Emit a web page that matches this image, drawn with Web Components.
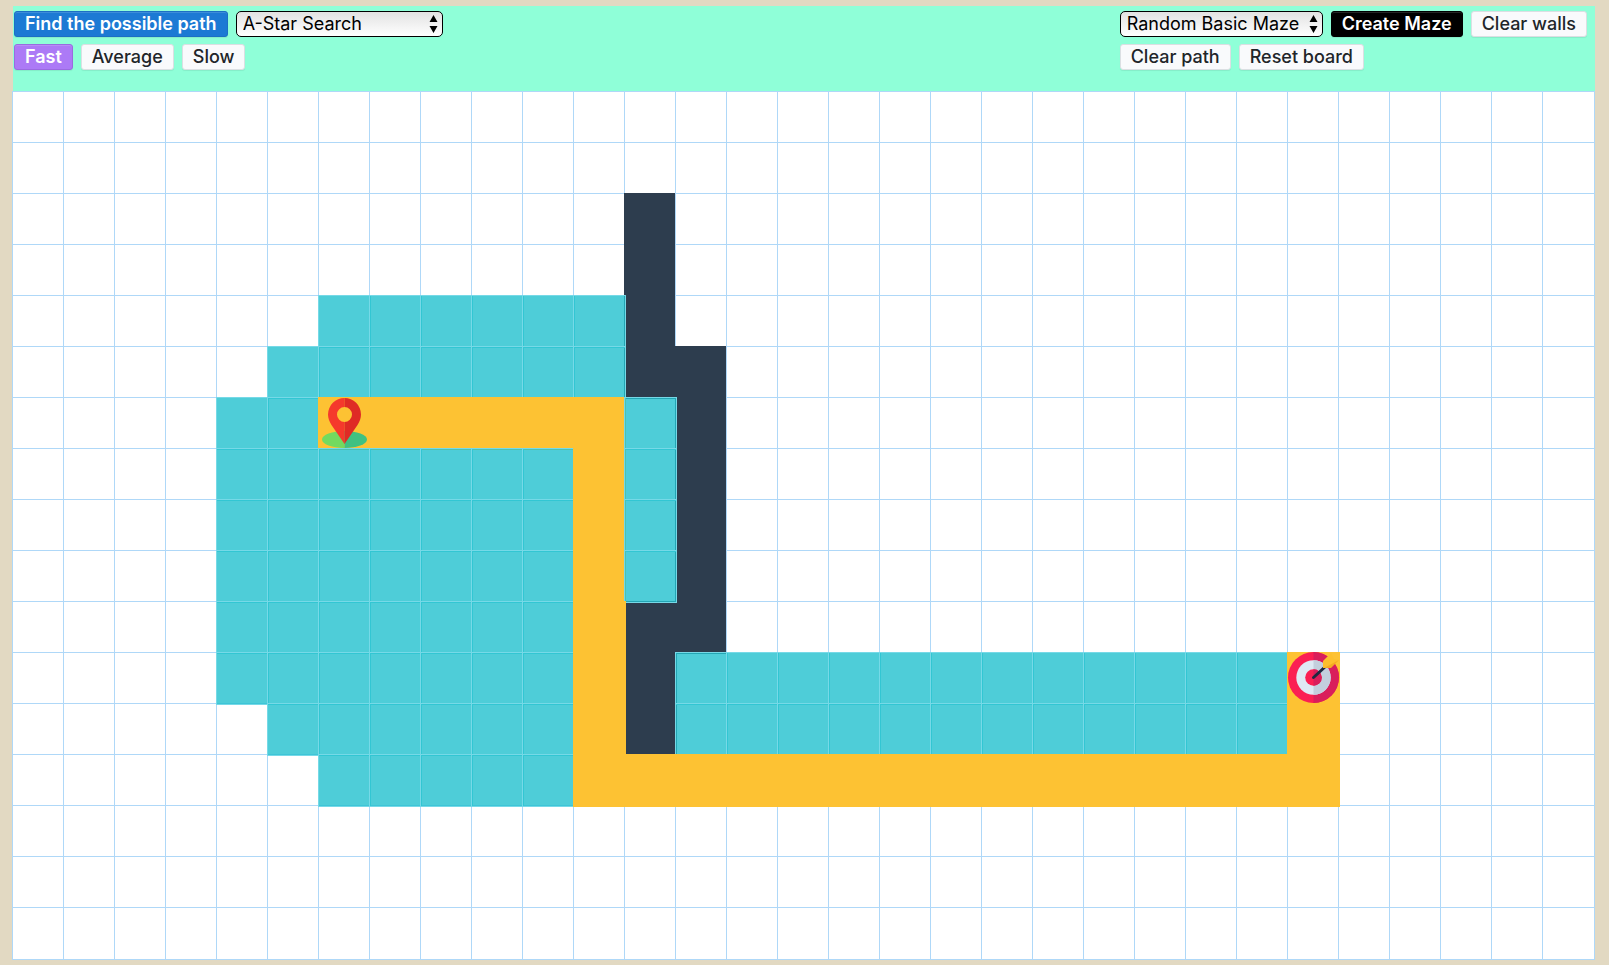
<!DOCTYPE html>
<html lang="en">
<head>
<meta charset="utf-8">
<title>Pathfinding Visualizer</title>
<style>
html{background:#e2d9c2}
body{margin:0;padding:6px 14px 4px 12px;font:500 18px/24px Inter,"Liberation Sans",sans-serif;color:#212529}
</style>
</head>
<body>
<path-app></path-app>
<script>
const PIN = `<svg viewBox="0 0 51 51" aria-label="Start"><path d="M4 42.500a22.500 8.500 0 0 1 22.500-8.500v17A22.500 8.500 0 0 1 4 42.500z" fill="#73da5f"/><path d="M49 42.500a22.500 8.500 0 0 0-22.500-8.500v17A22.500 8.500 0 0 0 49 42.500z" fill="#40c181"/><path d="M26.500 1A16.500 16.500 0 0 0 10 17.500c0 4 1.500 7 3.500 10.500L26.500 47V25a7.500 7.500 0 0 1 0-15z" fill="#f5392c"/><path d="M26.500 1A16.500 16.500 0 0 1 43 17.500c0 4-1.500 7-3.500 10.500L26.500 47V25a7.500 7.500 0 0 0 0-15z" fill="#df2b25"/></svg>`;
const TARGET = `<svg viewBox="-1 0 53 53" class="target" aria-label="Target"><circle cx="25.500" cy="25.500" r="25.500" fill="#fb1f53"/><path d="M25.500 0a25.500 25.500 0 0 1 0 51z" fill="#d91e5b"/><circle cx="25.500" cy="25.500" r="17.200" fill="#dfe9f4"/><path d="M25.500 8.300a17.200 17.200 0 0 1 0 34.400z" fill="#c3cfdd"/><circle cx="25.500" cy="25.500" r="8.300" fill="#fb1f53"/><path d="M25.500 17.200a8.300 8.300 0 0 1 0 16.600z" fill="#d91e5b"/><path d="M25.500 25.500L38 14" stroke="#1f2940" stroke-width="3" stroke-linecap="round"/><path d="M35 9L43 1l3 6 5 1-9 8h-7z" fill="#fdbf2d"/><path d="M36 16L51 8l-8 8z" fill="#f4ab22"/></svg>`;

class AppButton extends HTMLElement{
  connectedCallback(){
    this.attachShadow({mode:'open'}).innerHTML=`<style>
:host{display:block}
button{box-sizing:border-box;height:26px;padding:0 10px;margin:0;border:1px solid #dbdfe3;border-radius:3px;background:#f9fafc;color:inherit;font:inherit;white-space:nowrap;display:block;width:100%;box-shadow:inset 0 1px 0 rgba(255,255,255,.15),0 1px 1px rgba(0,0,0,.075)}
:host([tone]) button{font-weight:600;color:#fff}
:host([tone=primary]) button{background:#1c7ad4;border-color:#1c6fc4}
:host([tone=active]) button{background:#ac7af6;border-color:#9a6be0}
:host([tone=dark]) button{background:#000;border-color:#000}
</style><button type="button"><slot></slot></button>`;
  }
}
customElements.define('app-button',AppButton);

class AppSelect extends HTMLElement{
  connectedCallback(){
    const options=this.getAttribute('options').split(',').map(o=>`<option>${o}</option>`).join('');
    this.attachShadow({mode:'open'}).innerHTML=`<style>
:host{display:block;position:relative}
select{appearance:none;box-sizing:border-box;display:block;width:100%;height:26px;margin:0;padding:0 18px 0 6px;border:1px solid #000;border-radius:5px;background:linear-gradient(#e2e2e2,#fff);font:inherit;font-weight:400;color:#000}
svg{position:absolute;right:5px;top:4px;width:9px;height:18px;pointer-events:none}
</style><select aria-label="${this.getAttribute('label')}">${options}</select><svg viewBox="0 0 9 18"><path d="M4.500 0L8.500 7h-8zM4.500 18L.500 11h8z"/></svg>`;
  }
}
customElements.define('app-select',AppSelect);

class ToolBar extends HTMLElement{
  connectedCallback(){
    this.attachShadow({mode:'open'}).innerHTML=`<style>
:host{display:flex;justify-content:space-between;box-sizing:border-box;min-height:85px;margin-left:1px;padding:5px 8px 0 1px;background:#8fffd8}
.row{display:flex;gap:8px;margin-bottom:7px}
.algo{width:207px}.maze{width:203px}
</style>
<div><div class="row"><app-button tone="primary">Find the possible path</app-button><app-select class="algo" label="Algorithm" options="A-Star Search,Dijkstra,Breadth First Search,Depth First Search"></app-select></div>
<div class="row"><app-button tone="active">Fast</app-button><app-button>Average</app-button><app-button>Slow</app-button></div></div>
<div><div class="row"><app-select class="maze" label="Maze" options="Random Basic Maze,Recursive Maze"></app-select><app-button tone="dark">Create Maze</app-button><app-button>Clear walls</app-button></div>
<div class="row"><app-button>Clear path</app-button><app-button>Reset board</app-button></div></div>`;
  }
}
customElements.define('tool-bar',ToolBar);

/* One character per cell: # wall, o visited, * path, S start, T target. */
const MAP=[
'','',
'............#',
'............#',
'......oooooo#',
'.....ooooooo##',
'....ooS*****o#',
'....ooooooo*o#',
'....ooooooo*o#',
'....ooooooo*o#',
'....ooooooo*##',
'....ooooooo*#ooooooooooooT',
'.....oooooo*#oooooooooooo*',
'......ooooo***************',
'','',''];
const KIND={'#':'wall','o':'seen','*':'path','S':'path','T':'path'};
class MazeBoard extends HTMLElement{
  connectedCallback(){
    const cells=MAP.map(r=>[...r.padEnd(31,'.')].map(c=>`<i class="${KIND[c]||''}">${c==='S'?PIN:c==='T'?TARGET:''}</i>`).join('')).join('');
    this.attachShadow({mode:'open'}).innerHTML=`<style>
:host{display:grid;grid-template-columns:repeat(30,51px) 1fr;grid-template-rows:repeat(16,51px) 52px;background:#fff;border:solid #afd8f8;border-width:0 1px 1px 0}
i{box-sizing:border-box;background:#fff;border:solid #afd8f8;border-width:1px 0 0 1px;position:relative}
/* Filled cells overlap the next row and column, as their borders do. */
.wall,.seen,.path{margin:0 -2px -2px 0}
.wall{background:#2d3d4e;border-color:#2d3d4e}
.seen{z-index:1;background:rgba(34,192,206,.8);border:1px solid #76d9e7}
.path{z-index:1;background:#fdc233;border:0}
svg{display:block;width:51px;height:51px}
.target{width:53px;height:53px}
</style>${cells}`;
  }
}
customElements.define('maze-board',MazeBoard);

class PathApp extends HTMLElement{
  connectedCallback(){
    this.attachShadow({mode:'open'}).innerHTML=`<style>:host{display:block}</style><tool-bar></tool-bar><maze-board></maze-board>`;
  }
}
customElements.define('path-app',PathApp);
</script>
</body>
</html>
